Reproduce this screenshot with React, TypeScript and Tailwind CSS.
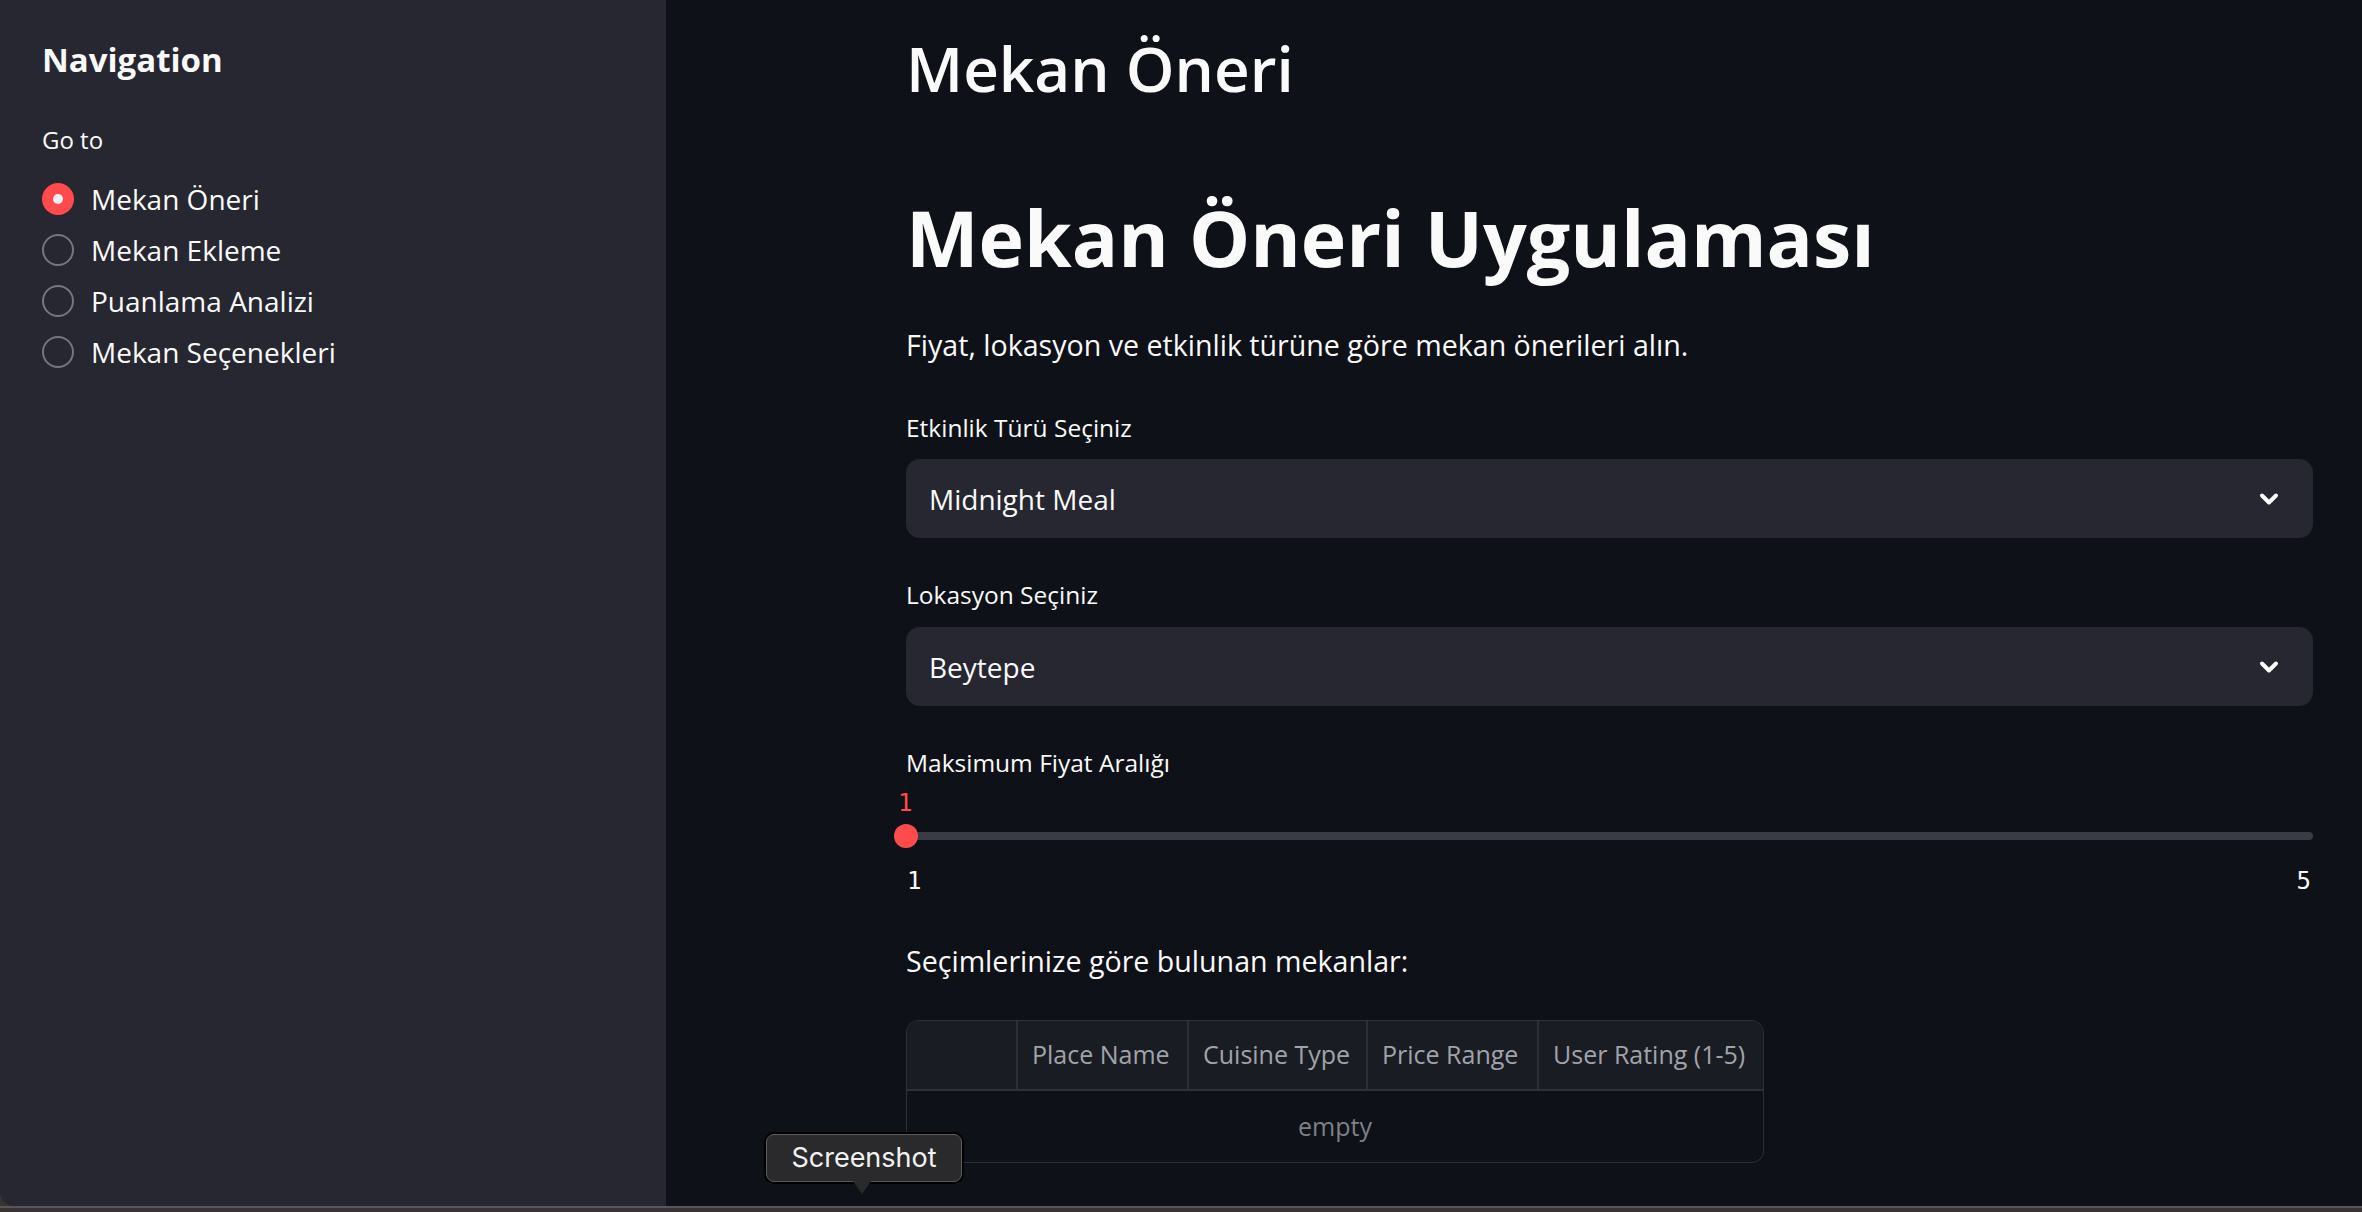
import React from 'react';
import { ChevronDown } from 'lucide-react';

const pages = ['Mekan Öneri', 'Mekan Ekleme', 'Puanlama Analizi', 'Mekan Seçenekleri'];

const columns = [
  { label: '', width: 'w-[111px]' },
  { label: 'Place Name', width: 'w-[171px]' },
  { label: 'Cuisine Type', width: 'w-[179px]' },
  { label: 'Price Range', width: 'w-[171px]' },
  { label: 'User Rating (1-5)', width: 'flex-1' },
];

const Radio = ({ label, checked }: { label: string; checked: boolean }) => (
  <div className="flex h-[51px] items-center">
    {checked ? (
      <span className="flex h-[32px] w-[32px] items-center justify-center rounded-full bg-[#ff4b4b]">
        <span className="h-[10px] w-[10px] rounded-full bg-[#eef0f4]" />
      </span>
    ) : (
      <span className="h-[32px] w-[32px] rounded-full border-2 border-[#76777d]" />
    )}
    <span className="ml-[17px] text-[28px] leading-[40px] text-[#fafafa]">{label}</span>
  </div>
);

const SelectBox = ({ value }: { value: string }) => (
  <div className="flex h-[79px] items-center justify-between rounded-[14px] bg-[#262730] pl-[23px] pr-[30px]">
    <span className="text-[28px] text-[#fafafa]">{value}</span>
    <ChevronDown size={28} strokeWidth={3.4} className="text-white" />
  </div>
);

const App = () => {
  return (
    <div className="relative flex h-[1212px] w-[2362px] flex-col overflow-hidden bg-[#3a3430] font-['Open_Sans',sans-serif]">
      <div className="flex h-[1206px] overflow-hidden rounded-bl-[14px]">
        {/* Sidebar */}
        <aside className="w-[666px] shrink-0 bg-[#262730] pl-[42px]">
          <h2 className="mt-[38px] text-[33px] font-bold leading-[44px] text-[#fafafa]">Navigation</h2>
          <p className="mt-[40px] text-[24px] leading-[36px] text-[#fafafa]">Go to</p>
          <div className="mt-[15px] flex flex-col">
            {pages.map((p, i) => (
              <Radio key={p} label={p} checked={i === 0} />
            ))}
          </div>
        </aside>

        {/* Main */}
        <main className="flex-1 bg-[#0e1117] pl-[240px]">
          <div className="w-[1407px]">
            <h2 className="mt-[25px] text-[62px] font-semibold leading-[86px] text-[#fafafa]">Mekan Öneri</h2>
            <h1 className="mt-[74px] text-[77px] font-bold leading-[106px] text-[#fafafa]">Mekan Öneri Uygulaması</h1>
            <p className="mt-[30px] text-[28.6px] leading-[48px] text-[#fafafa]">
              Fiyat, lokasyon ve etkinlik türüne göre mekan önerileri alın.
            </p>

            <p className="mt-[39px] text-[24.5px] leading-[40px] text-[#fafafa]">Etkinlik Türü Seçiniz</p>
            <div className="mt-[11px]">
              <SelectBox value="Midnight Meal" />
            </div>

            <p className="mt-[37px] text-[24.5px] leading-[40px] text-[#fafafa]">Lokasyon Seçiniz</p>
            <div className="mt-[12px]">
              <SelectBox value="Beytepe" />
            </div>

            <p className="mt-[37px] text-[24.5px] leading-[40px] text-[#fafafa]">Maksimum Fiyat Aralığı</p>
            {/* Slider */}
            <div className="mt-[2px] h-[36px] font-['DejaVu_Sans_Mono',monospace] text-[24px] leading-[36px] text-[#ff4b4b]">
              <span className="-ml-[8px]">1</span>
            </div>
            <div className="relative mt-[3px] flex h-[24px] items-center">
              <div className="h-[8px] w-full rounded-full bg-[#3a3c45]" />
              <span className="absolute left-[-12px] top-0 h-[24px] w-[24px] rounded-full bg-[#ff4b4b]" />
            </div>
            <div className="mt-[15px] flex h-[36px] items-center justify-between pl-[1px] pr-[2px] font-['DejaVu_Sans_Mono',monospace] text-[24px] text-[#fafafa]">
              <span>1</span>
              <span>5</span>
            </div>

            <p className="mt-[38px] text-[28.6px] leading-[48px] text-[#fafafa]">Seçimlerinize göre bulunan mekanlar:</p>

            {/* Table */}
            <div className="mt-[35px] w-[858px] overflow-hidden rounded-[12px] border border-[#2e3038]">
              <div className="flex h-[70px] border-b-2 border-[#2e3038] bg-[#1a1c23]">
                {columns.map((c, i) => (
                  <div
                    key={i}
                    className={`${c.width} flex items-center px-[14px] text-[25px] text-[#a1a3aa] ${i < columns.length - 1 ? 'border-r-2 border-[#2e3038]' : ''}`}
                  >
                    {c.label}
                  </div>
                ))}
              </div>
              <div className="flex h-[71px] items-center justify-center text-[25px] text-[#7d8087]">empty</div>
            </div>
          </div>
        </main>
      </div>
      <div className="h-[6px] border-t-2 border-[#56565c] bg-[#3a3430]" />

      {/* Screenshot tooltip */}
      <div className="absolute left-[766px] top-[1134px]">
        <div className="flex h-[48px] w-[196px] items-center justify-center rounded-[8px] border border-[#5a5a5e] bg-[#2a2a2d] font-['Inter',sans-serif] text-[27px] text-[#f2f2f2] shadow-[0_0_0_2px_#000]">
          Screenshot
        </div>
        <div className="absolute left-[86px] top-[46px] h-0 w-0 border-l-[10px] border-r-[10px] border-t-[14px] border-l-transparent border-r-transparent border-t-[#2a2a2d]" />
      </div>
    </div>
  );
};

export default App;
